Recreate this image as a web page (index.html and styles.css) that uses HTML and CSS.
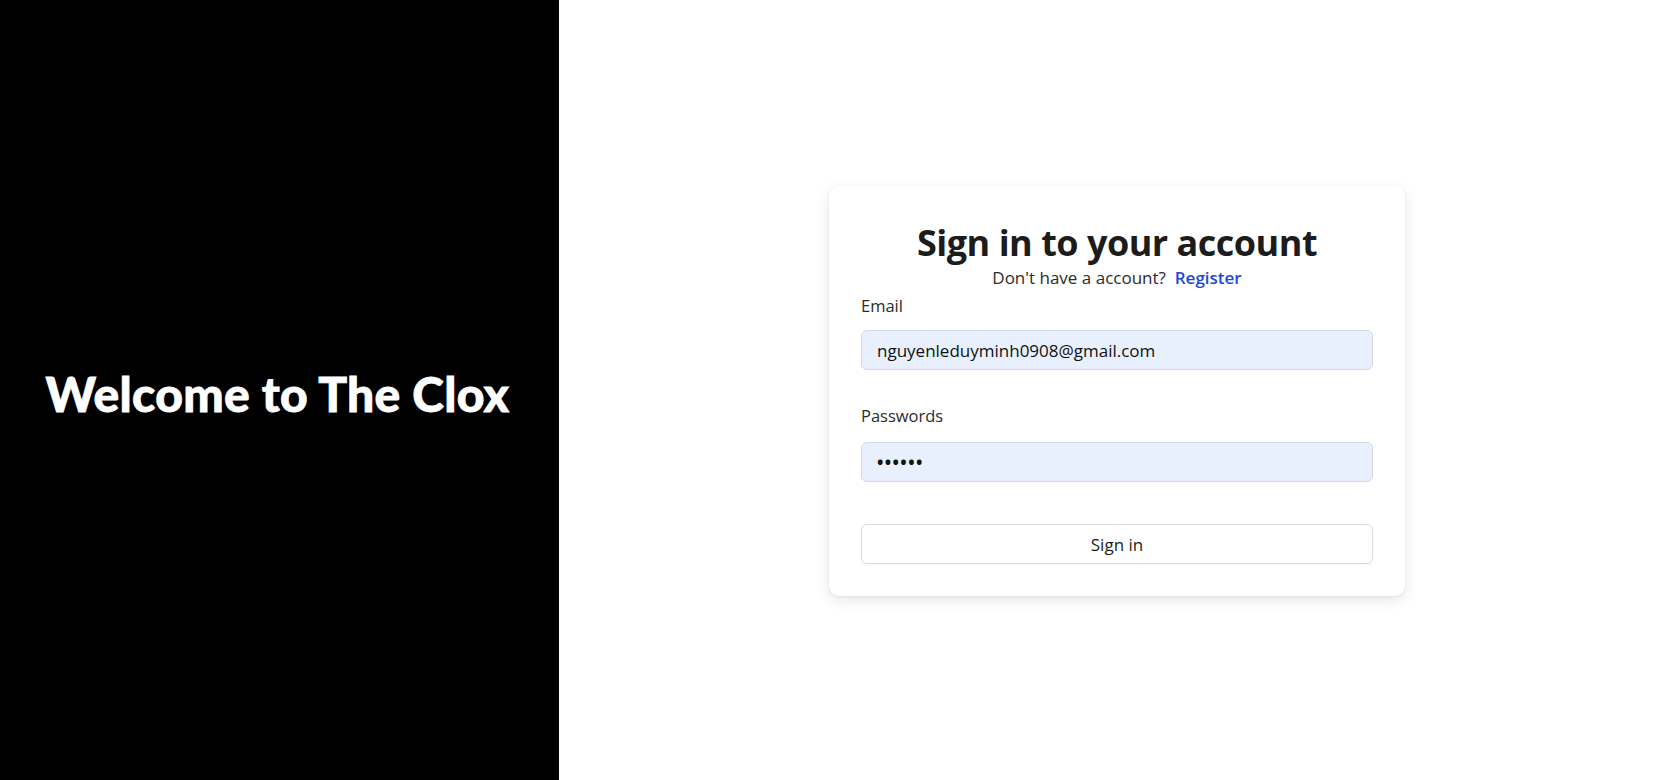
FILE: index.html
```html
<!DOCTYPE html>
<html lang="en">
<head>
<meta charset="utf-8">
<title>The Clox - Sign in</title>
<link rel="stylesheet" href="styles.css">
</head>
<body>
<div class="page">
  <aside class="brand">
    <h1 class="brand-title">Welcome to The Clox</h1>
  </aside>
  <main class="main">
    <form class="card">
      <h2 class="card-title">Sign in to your account</h2>
      <p class="card-sub">Don't have a account?&nbsp; <a class="link" href="#">Register</a></p>
      <div class="field">
        <label class="label" for="email">Email</label>
        <input class="input" id="email" type="email" value="nguyenleduyminh0908@gmail.com">
      </div>
      <div class="field field-pw">
        <label class="label" for="pw">Passwords</label>
        <input class="input input-pw" id="pw" type="password" value="123456">
      </div>
      <button class="btn" type="button">Sign in</button>
    </form>
  </main>
</div>
</body>
</html>
```
FILE: styles.css
```css
* { box-sizing: border-box; }
html, body { margin: 0; padding: 0; height: 100%; }
body {
  font-family: "Open Sans", "Noto Sans", sans-serif;
  background: #fff;
  color: #262626;
}
.page {
  display: flex;
  height: 780px;
}
.brand {
  width: 559px;
  flex: none;
  background: #000;
  display: flex;
  align-items: center;
  justify-content: center;
  padding-top: 6px;
  padding-right: 4px;
}
.brand-title {
  margin: 0;
  color: #fff;
  font-family: "Lato", sans-serif;
  font-weight: 900;
  font-size: 48px;
  letter-spacing: 0.3px;
  -webkit-text-stroke: 0.8px #fff;
}
.main {
  flex: 1;
  display: flex;
  align-items: center;
  justify-content: center;
  padding-left: 9px;
  padding-top: 2px;
}
.card {
  width: 576px;
  background: #fff;
  border-radius: 10px;
  box-shadow: 0 4px 14px rgba(0,0,0,0.10), 0 1px 3px rgba(0,0,0,0.05);
  padding: 32px;
  display: flex;
  flex-direction: column;
}
.card-title {
  margin: 3px 0 0;
  text-align: center;
  font-size: 36px;
  line-height: 44px;
  font-weight: 700;
  color: #1c1c1c;
  letter-spacing: -0.5px;
}
.card-sub {
  margin: 1px 0 0;
  text-align: center;
  font-size: 17px;
  line-height: 24px;
  color: #2b2b2b;
}
.link {
  color: #1d47d8;
  font-weight: 600;
  text-decoration: none;
}
.field {
  display: flex;
  flex-direction: column;
  margin-top: 4px;
}
.field-pw { margin-top: 34px; }
.label {
  font-size: 16.5px;
  line-height: 24px;
  color: #2b2b2b;
}
.input {
  margin-top: 12px;
  height: 40px;
  border: 1px solid #d4d8de;
  border-radius: 6px;
  background: #e8f0fe;
  padding: 0 15px;
  font-family: "Open Sans", sans-serif;
  font-size: 17px;
  color: #111;
  outline: none;
}
.input-pw { margin-top: 14px; letter-spacing: 1.4px; font-weight: 700; }
.btn {
  margin-top: 42px;
  height: 40px;
  background: #fff;
  border: 1px solid #dcdcdc;
  border-radius: 6px;
  font-family: "Open Sans", sans-serif;
  font-size: 17px;
  color: #1c1c1c;
  box-shadow: 0 1px 2px rgba(0,0,0,0.05);
  cursor: pointer;
}
```
